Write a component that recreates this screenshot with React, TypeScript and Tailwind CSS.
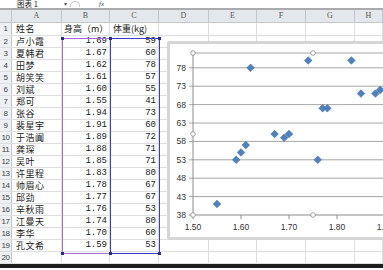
import React from "react";

const rows = [
  { name: "姓名", h: "身高（m）", w: "体重(kg)", head: true },
  { name: "卢小霞", h: "1.69", w: "59" },
  { name: "夏韩君", h: "1.67", w: "60" },
  { name: "田梦", h: "1.62", w: "78" },
  { name: "胡笑笑", h: "1.61", w: "57" },
  { name: "刘斌", h: "1.60", w: "55" },
  { name: "郑可", h: "1.55", w: "41" },
  { name: "张谷", h: "1.94", w: "73" },
  { name: "裴星宇", h: "1.91", w: "60" },
  { name: "于浩阗", h: "1.89", w: "72" },
  { name: "龚琛", h: "1.88", w: "71" },
  { name: "吴叶", h: "1.85", w: "71" },
  { name: "许里程", h: "1.83", w: "80" },
  { name: "帅眉心", h: "1.78", w: "67" },
  { name: "邱劲", h: "1.77", w: "67" },
  { name: "辛秋雨", h: "1.76", w: "53" },
  { name: "江曼天", h: "1.74", w: "80" },
  { name: "李华", h: "1.70", w: "60" },
  { name: "孔文希", h: "1.59", w: "53" },
  { name: "", h: "", w: "" },
];

const cols = ["A", "B", "C", "D", "E", "F", "G", "H"];
const grid = "grid grid-cols-[12px_50px_48px_49px_50px_48px_49px_49px_1fr]";

const px = (h: number) => 193 + (h - 1.5) * 480;
const py = (w: number) => 215 - (w - 38) * 3.68;

function Chart() {
  const yTicks = [78, 73, 68, 63, 58, 53, 48, 43, 38];
  const xTicks = [1.5, 1.6, 1.7, 1.8, 1.9];
  const pts = rows.filter((r) => !r.head && r.h).map((r) => [px(parseFloat(r.h)), py(parseFloat(r.w))]);
  return (
    <div className="absolute left-[167px] top-[41px] w-[240px] h-[199px] rounded-[2px] border-[3px] border-[#d6d6d6] bg-white overflow-hidden">
      <svg width="240" height="193" className="block">
        <g transform="translate(-170,-44)" fontFamily="'Liberation Sans', Arial, sans-serif" fontSize="8.5" fill="#333">
          <line x1="193" y1="53" x2="440" y2="53" stroke="#a6a6a6" strokeWidth="1" />
          {yTicks.map((t) => (
            <g key={t}>
              <line x1="189" y1={py(t)} x2="440" y2={py(t)} stroke={t === 38 ? "#8c8c8c" : "#a6a6a6"} strokeWidth="1" />
              <text x="186" y={py(t) + 3} textAnchor="end">{t}</text>
            </g>
          ))}
          <line x1="193" y1="53" x2="193" y2="215" stroke="#8c8c8c" strokeWidth="1" />
          {xTicks.map((t) => (
            <g key={t}>
              <line x1={px(t)} y1="215" x2={px(t)} y2="219" stroke="#8c8c8c" />
              <text x={px(t)} y="229.5" textAnchor="middle">{t.toFixed(2)}</text>
            </g>
          ))}
          {pts.map(([x, y], i) => (
            <polygon key={i} points={`${x},${y - 3.8} ${x + 3.8},${y} ${x},${y + 3.8} ${x - 3.8},${y}`} fill="#4f81bd" stroke="#3f6ea8" strokeWidth="0.6" />
          ))}
          {[[193, 53], [313, 53], [193, 134], [193, 215], [313, 215]].map(([x, y], i) => (
            <circle key={i} cx={x} cy={y} r="2.3" fill="#fff" stroke="#8c8c8c" strokeWidth="0.8" />
          ))}
        </g>
      </svg>
      <div className="absolute left-[160px] top-[-3px] w-[8px] h-[3px] bg-[#b8b8b8]" />
      <div className="absolute left-[160px] bottom-[-3px] w-[8px] h-[3px] bg-[#b8b8b8]" />
    </div>
  );
}

export default function App() {
  return (
    <div className="relative w-[383px] h-[270px] overflow-hidden bg-white text-[#1a1a1a] font-['Liberation_Sans','Noto_Sans_CJK_SC',sans-serif]">
      <div className="h-[10px] flex items-center text-[7.5px] leading-none border-b-2 border-[#a9abae]">
        <div className="w-[70px] h-full flex items-center justify-between pl-[17px] pr-[3px] font-['Noto_Sans_CJK_SC',sans-serif]">
          <span className="leading-[8px]">图表 1</span>
          <span className="text-[6px] text-[#555]">▾</span>
        </div>
        <div className="w-[10px] h-[6px] rounded-t-full border-t border-l border-r border-[#c8c8c8]" />
        <span className="ml-[19px] italic font-['Liberation_Serif',serif] text-[7px] text-[#444]">fx</span>
      </div>
      <div className={`${grid} h-[13px] bg-[#e4e7ec] border-b border-[#c3c7cd] text-[8px] text-[#555] font-['Liberation_Serif',serif]`}>
        <div className="border-r border-[#c3c7cd]" />
        {cols.map((c) => (
          <div key={c} className="flex items-center justify-center border-r border-[#c3c7cd]">{c}</div>
        ))}
      </div>
      {rows.map((r, i) => (
        <div key={i} className={`${grid} ${i === 0 ? "h-[13px]" : "h-[12px]"} border-b border-[#dcdee0] leading-none`}>
          <div className="flex items-center justify-center bg-[#eef0f3] border-r border-[#c3c7cd] text-[8px] text-[#444] tracking-[-0.5px]">{i + 1}</div>
          <div className="flex items-center pl-[4px] border-r border-[#dcdee0] text-[9px] tracking-[0.5px] font-['Noto_Sans_CJK_SC',sans-serif]">
            <span className="leading-[10px]">{r.name}</span>
          </div>
          {r.head ? (
            <div className="flex items-center pl-[2px] border-r border-[#dcdee0] text-[9px] font-['Noto_Sans_CJK_SC',sans-serif] whitespace-nowrap">
              <span className="leading-[10px]">{r.h}</span>
            </div>
          ) : (
            <div className="flex items-center justify-end pr-[2px] border-r border-[#dcdee0] text-[9px] font-['Liberation_Mono',monospace]">{r.h}</div>
          )}
          {r.head ? (
            <div className="flex items-center pl-[3px] border-r border-[#dcdee0] text-[9px] font-['Noto_Sans_CJK_SC',sans-serif] whitespace-nowrap">
              <span className="leading-[10px]">{r.w}</span>
            </div>
          ) : (
            <div className="flex items-center justify-end pr-[2px] border-r border-[#dcdee0] text-[9px] font-['Liberation_Mono',monospace]">{r.w}</div>
          )}
          {[0, 1, 2, 3, 4].map((k) => (
            <div key={k} className="border-r border-[#dcdee0]" />
          ))}
        </div>
      ))}
      <div className="h-[4px] bg-[#1c1c1c]" />

      <div className="absolute left-[62px] top-[38px] w-[49px] h-[216px] border border-[#a36fd6]" />
      <div className="absolute left-[110px] top-[38px] w-[50px] h-[216px] border border-[#3b3bc8]" />
      {[[62, 38], [110, 38], [159, 38], [62, 253], [110, 253], [159, 253]].map(([x, y], i) => (
        <div key={i} className="absolute w-[3px] h-[3px] bg-[#2b2b8c]" style={{ left: x - 1, top: y - 1 }} />
      ))}

      <Chart />
    </div>
  );
}
